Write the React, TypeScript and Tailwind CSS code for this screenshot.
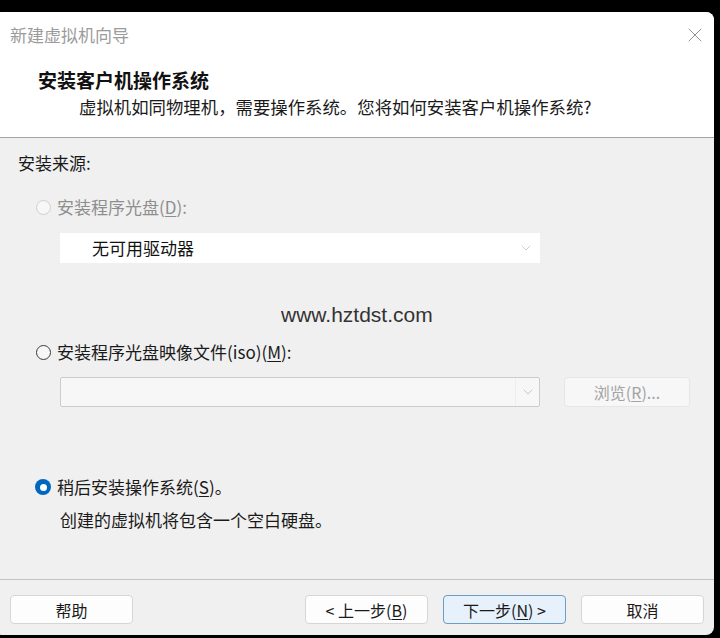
import { ChevronDown, X } from "lucide-react";

const font = { fontFamily: '"Noto Sans CJK SC", "Noto Sans", sans-serif' };

const Radio = ({ state }: { state: "disabled" | "off" | "on" }) => {
  if (state === "on")
    return (
      <span className="w-[16px] h-[16px] rounded-full bg-[#0067c0] flex items-center justify-center shrink-0">
        <span className="w-[7px] h-[7px] rounded-full bg-white" />
      </span>
    );
  return (
    <span
      className={
        state === "disabled"
          ? "w-[15px] h-[15px] rounded-full border border-[#cfcfcf] bg-[#f7f7f7] shrink-0"
          : "w-[15px] h-[15px] rounded-full border border-[#3a3a3a] bg-[#f7f7f7] shrink-0"
      }
    />
  );
};

const Btn = ({ children, primary }: { children: React.ReactNode; primary?: boolean }) => (
  <button
    className={
      primary
        ? "w-[123px] h-[29px] rounded-[4px] border border-[#6d9cc4] bg-[#e6f1fb] text-[16px] text-[#1a1a1a] leading-none"
        : "w-[123px] h-[29px] rounded-[4px] border border-[#d6d6d6] bg-[#fdfdfd] text-[16px] text-[#1a1a1a] leading-none"
    }
  >
    {children}
  </button>
);

export default function App() {
  return (
    <div className="w-[720px] h-[638px] bg-black overflow-hidden pt-[12px]" style={font}>
      <div className="ml-[-6px] w-[720px] h-[623px] rounded-[8px] overflow-hidden flex flex-col bg-[#f0f0f0]">
        {/* Header */}
        <div className="bg-white border-b border-[#a3a3a3] h-[126px] shrink-0">
          <div className="h-[46px] flex items-center justify-between pl-[16px] pr-[7px]">
            <span className="text-[17px] text-[#9b9b9b] leading-[24px]">新建虚拟机向导</span>
            <X className="w-[24px] h-[24px] text-[#8a8a8a]" strokeWidth={0.9} />
          </div>
          <div className="pl-[44px] mt-[10px] text-[19px] font-bold text-[#111] leading-[24px]">
            安装客户机操作系统
          </div>
          <div className="pl-[85px] mt-[3px] text-[17.4px] text-[#1a1a1a] leading-[24px]">
            虚拟机如同物理机，需要操作系统。您将如何安装客户机操作系统?
          </div>
        </div>

        {/* Body */}
        <div className="flex-1 text-[17px] text-[#1a1a1a] leading-[24px]">
          <div className="pl-[24px] pt-[13px]">安装来源:</div>

          <div className="pl-[42px] mt-[20px] h-[24px] flex items-center gap-[6px] text-[#8e8e8e]">
            <Radio state="disabled" />
            <span>
              安装程序光盘(<span className="underline underline-offset-2">D</span>):
            </span>
          </div>

          <div className="ml-[66px] mt-[14px] w-[480px] h-[30px] bg-white flex items-center justify-between pl-[32px] pr-[6px]">
            <span className="text-[#111]">无可用驱动器</span>
            <ChevronDown className="w-[16px] h-[16px] text-[#c4c4c4]" strokeWidth={1.25} />
          </div>

          <div
            className="mt-[40px] pl-[287px] text-[21px] text-[#333] leading-[24px]"
            style={{ fontFamily: '"Liberation Sans", Arial, sans-serif' }}
          >
            www.hztdst.com
          </div>

          <div className="pl-[42px] mt-[13px] h-[24px] flex items-center gap-[6px]">
            <Radio state="off" />
            <span>
              安装程序光盘映像文件(iso)(<span className="underline underline-offset-2">M</span>):
            </span>
          </div>

          <div className="flex items-center mt-[13px] pl-[66px] gap-[24px]">
            <div className="w-[480px] h-[30px] border border-[#cccccc] rounded-[2px] bg-[#f7f7f7] flex items-center justify-end">
              <div className="h-full w-[24px] flex items-center justify-center border-l border-[#efefef]">
                <ChevronDown className="w-[16px] h-[16px] text-[#bdbdbd]" strokeWidth={1.25} />
              </div>
            </div>
            <div className="w-[126px] h-[30px] rounded-[4px] border border-[#e6e6e6] bg-[#f7f7f7] flex items-center justify-center text-[16px] text-[#a3a3a3]">
              浏览(<span className="underline underline-offset-2">R</span>)...
            </div>
          </div>

          <div className="pl-[41px] mt-[68px] h-[24px] flex items-center gap-[6px]">
            <Radio state="on" />
            <span>
              稍后安装操作系统(<span className="underline underline-offset-2">S</span>)。
            </span>
          </div>

          <div className="pl-[66px] mt-[9px]">创建的虚拟机将包含一个空白硬盘。</div>
        </div>

        {/* Footer */}
        <div className="h-[56px] shrink-0 border-t border-[#c4c4c4] flex items-start pt-[15px] pl-[16px] pr-[10px]">
          <Btn>帮助</Btn>
          <div className="flex-1" />
          <div className="flex gap-[15px]">
            <Btn>
              &lt; 上一步(<span className="underline underline-offset-2">B</span>)
            </Btn>
            <Btn primary>
              下一步(<span className="underline underline-offset-2">N</span>) &gt;
            </Btn>
            <Btn>取消</Btn>
          </div>
        </div>
      </div>
    </div>
  );
}
